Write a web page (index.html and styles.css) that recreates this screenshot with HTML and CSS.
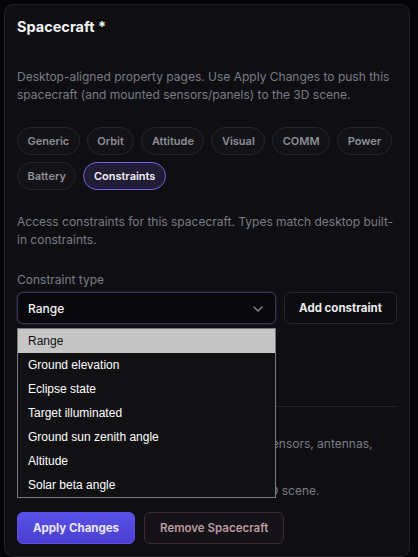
FILE: index.html
```html
<!DOCTYPE html>
<html lang="en">
<head>
  <meta charset="UTF-8" />
  <meta name="viewport" content="width=device-width, initial-scale=1.0" />
  <title>Spacecraft</title>
  <link rel="stylesheet" href="styles.css">
</head>
<body>
  <div class="panel">
    <h1 class="panel-title">Spacecraft *</h1>

    <p class="hint intro">Desktop-aligned property pages. Use Apply Changes to push this spacecraft (and mounted sensors/panels) to the 3D scene.</p>

    <div class="tabs">
      <button class="tab">Generic</button>
      <button class="tab">Orbit</button>
      <button class="tab">Attitude</button>
      <button class="tab">Visual</button>
      <button class="tab">COMM</button>
      <button class="tab">Power</button>
      <button class="tab">Battery</button>
      <button class="tab active">Constraints</button>
    </div>

    <p class="hint">Access constraints for this spacecraft. Types match desktop built-in constraints.</p>

    <label class="field-label">Constraint type</label>
    <div class="constraint-row">
      <div class="select-wrap">
        <div class="select">
          <span>Range</span>
          <svg class="chevron" width="10" height="6" viewBox="0 0 10 6"><path d="M1 1l4 4 4-4" fill="none" stroke="#8a8a92" stroke-width="1.3" stroke-linecap="round" stroke-linejoin="round"/></svg>
        </div>
        <ul class="options">
          <li class="selected">Range</li>
          <li>Ground elevation</li>
          <li>Eclipse state</li>
          <li>Target illuminated</li>
          <li>Ground sun zenith angle</li>
          <li>Altitude</li>
          <li>Solar beta angle</li>
        </ul>
      </div>
      <button class="btn add">Add constraint</button>
    </div>

    <p class="hint empty">No constraints added.</p>

    <div class="divider"></div>

    <h2 class="section-title">Payloads</h2>
    <p class="hint">Payloads carried on this spacecraft include sensors, antennas, panels.</p>
    <p class="hint apply-note">Apply Changes to apply all payloads to the 3D scene.</p>

    <div class="actions">
      <button class="btn primary">Apply Changes</button>
      <button class="btn danger">Remove Spacecraft</button>
    </div>
  </div>
</body>
</html>
```

FILE: styles.css
```css
body {
  margin: 0;
  padding: 4px 8px 4px 4px;
  background-color: #050507;
  color: #e6e6ea;
  font-family: Inter, "Noto Sans", sans-serif;
}

.panel {
  background-color: #0f0f13;
  border: 1px solid #1f1f25;
  border-radius: 9px;
  padding: 12px;
}

.panel-title {
  margin: 0;
  font-size: 14.5px;
  line-height: 20px;
  font-weight: 700;
  color: #f2f2f4;
}

.hint {
  margin: 0;
  font-size: 12px;
  line-height: 18px;
  color: #7b7b83;
}

.intro {
  margin-top: 31px;
}

.tabs {
  display: flex;
  flex-wrap: wrap;
  gap: 7px;
  margin: 23px 0;
}

.tab {
  height: 28px;
  padding: 0 9.5px;
  border: 1px solid #25252b;
  border-radius: 14px;
  background: #131317;
  color: #8e8e96;
  font-family: Inter, sans-serif;
  font-size: 11px;
  font-weight: 600;
}

.tab.active {
  border-color: #7b5bd6;
  background: #221d36;
  color: #f4f2fb;
}

.field-label {
  display: block;
  margin-top: 23px;
  font-size: 12px;
  line-height: 16px;
  color: #7b7b83;
}

.constraint-row {
  display: flex;
  gap: 8px;
  margin-top: 4px;
}

.select-wrap {
  position: relative;
  width: 259px;
}

.select {
  box-sizing: border-box;
  height: 32px;
  display: flex;
  align-items: center;
  justify-content: space-between;
  padding: 0 12px 0 10px;
  background: #09090b;
  border: 1px solid #3a3356;
  border-radius: 6px;
  box-shadow: 0 0 0 1px #1d1930;
  font-size: 12px;
  font-weight: 500;
  color: #f2f2f4;
}

.chevron {
  margin-top: 1px;
}

.options {
  position: absolute;
  top: 36px;
  left: 0;
  right: 0;
  margin: 0;
  padding: 0;
  list-style: none;
  background: #111114;
  border: 1px solid #7a7a7e;
  font-family: "Liberation Sans", Arial, sans-serif;
  font-size: 12px;
  color: #ffffff;
  z-index: 2;
}

.options li {
  height: 24px;
  line-height: 24px;
  padding-left: 10px;
}

.options li.selected {
  background: #c6c6c6;
  color: #111;
}

.btn {
  height: 32px;
  padding: 0 15px;
  border: 1px solid #26262c;
  border-radius: 6px;
  background: #0c0c0f;
  color: #ececef;
  font-family: Inter, sans-serif;
  font-size: 11.5px;
  font-weight: 700;
  white-space: nowrap;
}

.btn.add {
  flex: 1;
  padding: 0;
}

.empty {
  margin-top: 20px;
}

.divider {
  height: 1px;
  background: #222228;
  margin: 44px 0 8px;
}

.section-title {
  margin: 0 0 2px;
  font-size: 13px;
  line-height: 18px;
  font-weight: 600;
  color: #d8d8dc;
}

.apply-note {
  margin-top: 11px;
}

.actions {
  display: flex;
  gap: 9px;
  margin-top: 12px;
}

.btn.primary {
  background: linear-gradient(#5b50e6, #4a3fd2);
  border-color: #5d52e8;
  color: #ebe9ff;
}

.btn.danger {
  background: #16121a;
  border-color: #3d2d30;
  color: #bd9b9e;
  font-weight: 600;
}
```
